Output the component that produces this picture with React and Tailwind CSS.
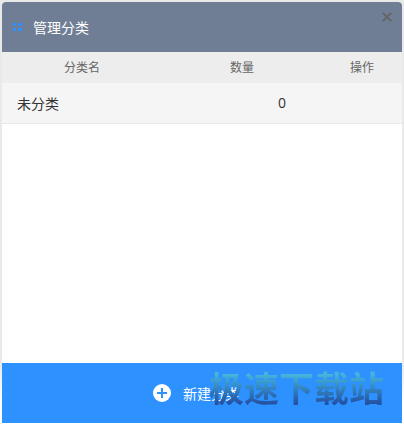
import { useState } from "react";

const DragDots = () => (
  <svg viewBox="0 0 9 8" className="w-[9px] h-2 shrink-0" fill="#2d92ff" aria-hidden="true">
    <rect x="0" y="0" width="3" height="3" />
    <rect x="5" y="0" width="4" height="3" />
    <rect x="0" y="5" width="3" height="3" />
    <rect x="5" y="5" width="4" height="3" />
  </svg>
);

const CloseIcon = () => (
  <svg viewBox="0 0 10 10" className="w-[10px] h-[10px]" stroke="#666666" strokeWidth="2" aria-hidden="true">
    <path d="M0.7 0.7 9.3 9.3M9.3 0.7 0.7 9.3" />
  </svg>
);

const PlusIcon = () => (
  <svg viewBox="0 0 18 18" className="w-[18px] h-[18px] shrink-0" aria-hidden="true">
    <circle cx="9" cy="9" r="9" fill="#ffffff" />
    <path d="M9 4v10M4 9h10" stroke="#2d92ff" strokeWidth="2" />
  </svg>
);

const App = () => {
  const [open, setOpen] = useState(true);
  const [categories, setCategories] = useState([{ name: "未分类", count: 0 }]);

  const addCategory = () => {
    setCategories([...categories, { name: "新分类", count: 0 }]);
  };

  if (!open) return null;

  return (
    <div className="min-h-screen flex flex-col bg-linear-to-b from-[#e9e9e9] from-85% to-white to-95% px-[2px] pt-[2px] pb-[3px] font-['Noto_Sans_CJK_SC','Noto_Sans',sans-serif]">
      <div className="flex-1 flex flex-col bg-white rounded-t overflow-hidden">

        {/* title bar */}
        <header className="h-[50px] bg-[#707e95] flex items-center pl-[11px] pr-[10px]">
          <DragDots />
          <h1 className="ml-[11px] text-sm text-white">管理分类</h1>
          <button
            type="button"
            aria-label="关闭"
            onClick={() => setOpen(false)}
            className="ml-auto self-start mt-[10px] cursor-pointer"
          >
            <CloseIcon />
          </button>
        </header>

        {/* category list */}
        <table className="w-full table-fixed border-separate border-spacing-0">
          <thead>
            <tr className="h-[31px] bg-[#ededed] text-xs text-[#666666]">
              <th className="w-2/5 px-0 pt-0 pb-[2px] font-normal">分类名</th>
              <th className="w-2/5 px-0 pt-0 pb-[2px] font-normal">数量</th>
              <th className="w-1/5 px-0 pt-0 pb-[2px] font-normal">操作</th>
            </tr>
          </thead>
          <tbody>
            {categories.map((category, index) => (
              <tr key={index} className="h-[41px] bg-[#f5f5f5] text-sm text-[#333333]">
                <td className="py-0 pl-[15px] border-b border-[#e8e8e8]">{category.name}</td>
                <td
                  colSpan={2}
                  className="p-0 border-b border-[#e8e8e8] text-center font-['Open_Sans',sans-serif]"
                >
                  {category.count}
                </td>
              </tr>
            ))}
          </tbody>
        </table>

        {/* footer */}
        <footer className="relative mt-auto">
          <button
            type="button"
            onClick={addCategory}
            className="w-full h-[60px] bg-[#2d92ff] flex items-center justify-center gap-3 pr-3 text-sm text-white cursor-pointer"
          >
            <PlusIcon />
            新建分类
          </button>
          {/* site watermark over the button */}
          <span className="absolute right-[18px] top-[6px] text-[35px] leading-9 font-bold text-transparent bg-clip-text bg-linear-to-b from-[#45b5dc] from-15% to-[#2552a3] to-95% pointer-events-none">
            极速下载站
          </span>
        </footer>

      </div>
    </div>
  );
};

export default App;
